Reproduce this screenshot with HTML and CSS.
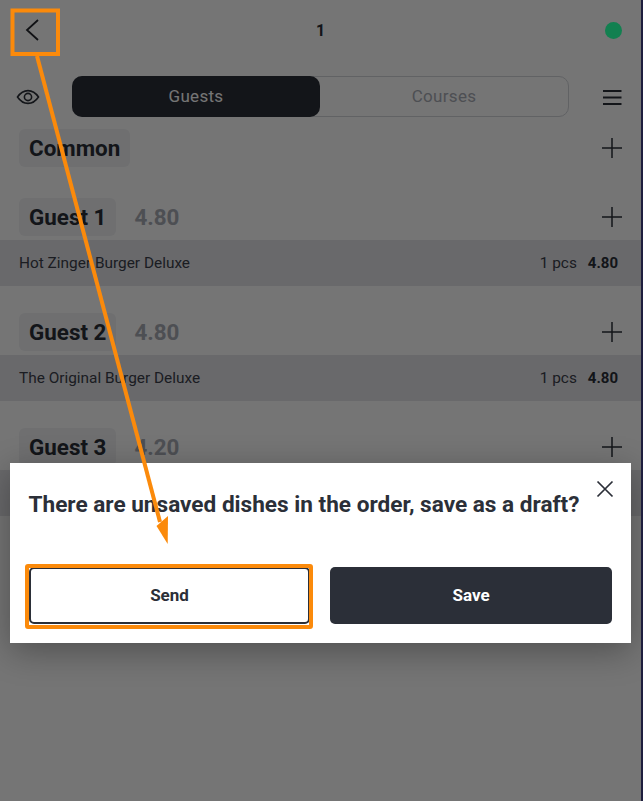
FILE: index.html
```html
<!DOCTYPE html>
<html lang="en">
<head>
<meta charset="utf-8">
<title>Order</title>
<link rel="stylesheet" href="styles.css">
</head>
<body>
<div class="app">
  <header class="topbar">
    <svg class="back" width="24" height="24" viewBox="0 0 24 24"><path d="M17 2 6 12 17 22" fill="none" stroke="currentColor" stroke-width="1.800"/></svg>
    <span class="order-no">1</span>
    <span class="status"></span>
  </header>
  <div class="tabrow">
    <svg class="eye" width="24" height="24" viewBox="0 0 24 24" fill="none" stroke="currentColor" stroke-width="1.600"><path d="M1.500 12C4.500 7.600 8 5.600 12 5.600S19.500 7.600 22.500 12C19.500 16.400 16 18.400 12 18.400S4.500 16.400 1.500 12Z"/><circle cx="12" cy="12" r="3.600"/></svg>
    <div class="tabs">
      <div class="tab tab-active">Guests</div>
      <div class="tab">Courses</div>
    </div>
    <svg class="menu" width="20" height="16" viewBox="0 0 20 16" fill="none" stroke="currentColor" stroke-width="1.800"><path d="M1 2H19.500M1 8.500H19.500M1 15H19.500"/></svg>
  </div>
  <section class="group group-common">
    <div class="group-head">
      <span class="chip">Common</span>
      <svg class="plus" width="20" height="20" viewBox="0 0 20 20" stroke="currentColor" stroke-width="1.500"><path d="M0 10H20M10 0V20"/></svg>
    </div>
  </section>
  <section class="group">
    <div class="group-head">
      <span class="chip">Guest 1</span><span class="total">4.80</span>
      <svg class="plus" width="20" height="20" viewBox="0 0 20 20" stroke="currentColor" stroke-width="1.500"><path d="M0 10H20M10 0V20"/></svg>
    </div>
    <div class="dish"><span class="dish-name">Hot Zinger Burger Deluxe</span><span class="qty">1 pcs</span><b class="price">4.80</b></div>
  </section>
  <section class="group">
    <div class="group-head">
      <span class="chip">Guest 2</span><span class="total">4.80</span>
      <svg class="plus" width="20" height="20" viewBox="0 0 20 20" stroke="currentColor" stroke-width="1.500"><path d="M0 10H20M10 0V20"/></svg>
    </div>
    <div class="dish"><span class="dish-name">The Original Burger Deluxe</span><span class="qty">1 pcs</span><b class="price">4.80</b></div>
  </section>
  <section class="group">
    <div class="group-head">
      <span class="chip">Guest 3</span><span class="total">4.20</span>
      <svg class="plus" width="20" height="20" viewBox="0 0 20 20" stroke="currentColor" stroke-width="1.500"><path d="M0 10H20M10 0V20"/></svg>
    </div>
    <div class="dish"></div>
  </section>
</div>
<div class="scrim"></div>
<div class="dialog">
  <svg class="close" width="18" height="18" viewBox="0 0 18 18" fill="none" stroke="currentColor" stroke-width="1.700"><path d="M1.500 1.500 16.500 16.500M16.500 1.500 1.500 16.500"/></svg>
  <p class="dialog-text">There are unsaved dishes in the order, save as a draft?</p>
  <div class="dialog-actions">
    <button class="btn btn-outline">Send</button>
    <button class="btn btn-solid">Save</button>
  </div>
</div>
<svg class="annotation" width="643" height="801" viewBox="0 0 643 801" fill="none">
  <rect x="12.500" y="10.500" width="45.500" height="43.500" stroke="#fb8a0b" stroke-width="4"/>
  <rect x="27" y="566" width="284" height="61" rx="1" stroke="#fb8a0b" stroke-width="4"/>
  <path d="M37 56 160 522" stroke="#fb8a0b" stroke-width="4"/>
  <path d="M156.500 526 168 516 167.700 544Z" fill="#fb8a0b"/>
</svg>
<div class="edge"></div>
</body>
</html>
```
FILE: styles.css
```css
* { box-sizing: border-box; }
html, body { margin: 0; padding: 0; }
body {
  width: 643px;
  height: 801px;
  overflow: hidden;
  position: relative;
  background: #fff;
  font-family: Roboto, "Liberation Sans", sans-serif;
  color: #2b2f38;
}
.app { width: 100%; height: 100%; }
.topbar {
  height: 60px;
  display: flex;
  align-items: center;
  justify-content: space-between;
  padding: 0 21px;
  position: relative;
}
.back { color: #23262d; }
.order-no {
  position: absolute;
  left: 316px;
  font-size: 16px;
  font-weight: 700;
  color: #2b2f38;
}
.status {
  position: relative;
  z-index: 1;
  width: 17px;
  height: 17px;
  border-radius: 50%;
  background: #128050;
}
.tabrow {
  height: 41px;
  margin-top: 16px;
  padding: 0 21px 0 16px;
  display: flex;
  align-items: center;
}
.eye { color: #2b2f38; flex: none; }
.tabs {
  width: 497px;
  height: 41px;
  margin-left: 32px;
  margin-right: 33px;
  border: 1px solid #d3d5da;
  border-radius: 10px;
  display: flex;
  flex: none;
}
.tab {
  flex: 1;
  display: flex;
  align-items: center;
  justify-content: center;
  padding-bottom: 1px;
  font-size: 17px;
  color: #a9acb6;
  letter-spacing: .3px;
}
.tab-active {
  flex: none;
  width: 248px;
  margin: -1px 0 -1px -1px;
  background: #2b2f38;
  color: #fff;
  border-radius: 10px;
}
.menu { flex: none; color: #2b2f38; }
.group { padding-top: 27px; }
.group-common { padding-top: 12px; padding-bottom: 4px; }
.group-head {
  height: 38px;
  display: flex;
  align-items: center;
  padding: 0 21px 0 19px;
}
.chip {
  height: 38px;
  padding: 0 10px;
  display: flex;
  align-items: center;
  background: #f1f2f5;
  border-radius: 6px;
  font-size: 22.400px;
  font-weight: 700;
  color: #2b2f38;
}
.total {
  margin-left: 18px;
  font-size: 22.400px;
  font-weight: 700;
  color: #a9acb6;
}
.plus { margin-left: auto; color: #2b2f38; }
.dish {
  height: 46px;
  margin-top: 4px;
  padding: 0 25px 0 19px;
  display: flex;
  align-items: center;
  font-size: 15.400px;
  background: #e4e5ea;
  color: #3c404a;
}
.dish-name { margin-right: auto; }
.price { margin-left: 11px; font-size: 15px; color: #2b2f38; }
.scrim {
  position: absolute;
  inset: 0;
  background: rgba(0, 0, 0, .54);
}
.dialog {
  position: absolute;
  left: 10px;
  top: 463px;
  width: 621px;
  height: 180px;
  background: #fff;
  padding: 28px 19px 0 19px;
  box-shadow: 0 8px 32px rgba(0, 0, 0, .32);
}
.close { position: absolute; right: 17px; top: 17px; color: #2b2f38; }
.dialog-text {
  margin: 0 0 0 -.5px;
  font-size: 22.600px;
  line-height: 28px;
  font-weight: 700;
  color: #2b2f38;
  white-space: nowrap;
}
.dialog-actions {
  margin-top: 48px;
  display: grid;
  grid-template-columns: 281px 282px;
  gap: 20px;
}
.btn {
  height: 57px;
  border-radius: 5px;
  font-family: inherit;
  font-size: 17px;
  font-weight: 700;
  padding: 0 0 2px;
}
.btn-outline { background: #fff; border: 2px solid #2b2f38; color: #2b2f38; }
.btn-solid { background: #2b2f38; border: 0; color: #fff; }
.annotation { position: absolute; left: 0; top: 0; }
.edge { position: absolute; right: 0; top: 0; width: 2px; height: 801px; background: #1e1e3e; }
```
